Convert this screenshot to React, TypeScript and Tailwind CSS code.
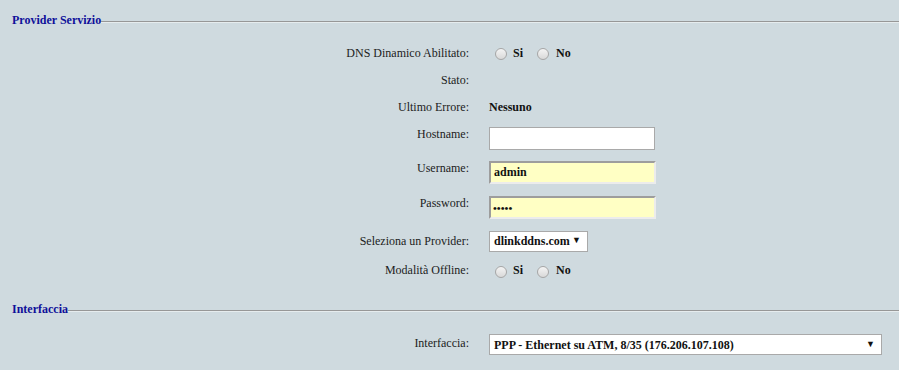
import React from "react";

const SectionTitle = ({ title }: { title: string }) => (
  <div className="flex items-center h-[14px] pl-[12px]">
    <span className="font-bold text-[12px] leading-[14px] text-[#10109a] whitespace-nowrap">
      {title}
    </span>
    <div className="flex-1 h-[2px] mt-[3px] border-t border-t-[#979797] border-b border-b-[#e6ecee]" />
  </div>
);

const Label = ({ text, className = "" }: { text: string; className?: string }) => (
  <div className={`w-[469px] text-right text-[12px] leading-[14px] text-[#1c1c1c] ${className}`}>
    {text}
  </div>
);

const Radio = () => (
  <span className="inline-block w-[12px] h-[12px] rounded-full border border-[#a6a6a6] bg-gradient-to-b from-[#f4f4f4] to-[#d9d9d9] mt-[3px]" />
);

const RadioPair = () => (
  <div className="ml-[26px] flex items-center text-[12px] font-bold text-[#111]">
    <Radio />
    <span className="ml-[6px]">Si</span>
    <span className="ml-[14px] flex items-center">
      <Radio />
    </span>
    <span className="ml-[7px]">No</span>
  </div>
);

const Select = ({ value, width }: { value: string; width: string }) => (
  <div
    className={`ml-[20px] ${width} h-[21px] bg-white border border-[#a9a9a9] flex items-center justify-between pl-[4px] pr-[6px] text-[12px] font-bold text-[#111]`}
  >
    <span>{value}</span>
    <span className="text-[9px] font-normal">▼</span>
  </div>
);

export default function App() {
  return (
    <div className="w-[899px] h-[370px] bg-[#cfdadf] font-['Liberation_Serif',serif] overflow-hidden">
      <div className="pt-[13px]">
        <SectionTitle title="Provider Servizio" />
      </div>

      <div className="mt-[12px]">
        <div className="flex items-center h-[27px]">
          <Label text="DNS Dinamico Abilitato:" />
          <RadioPair />
        </div>
        <div className="flex items-center h-[27px]">
          <Label text="Stato:" />
        </div>
        <div className="flex items-center h-[27px]">
          <Label text="Ultimo Errore:" />
          <span className="ml-[20px] text-[12px] font-bold text-[#111]">Nessuno</span>
        </div>

        <div className="flex items-start h-[35px]">
          <Label text="Hostname:" className="mt-[7px]" />
          <input
            readOnly
            className="ml-[20px] mt-[7px] w-[166px] h-[23px] bg-white border border-[#a9a9a9] outline-none"
          />
        </div>
        <div className="flex items-start h-[35px]">
          <Label text="Username:" className="mt-[6px]" />
          <input
            readOnly
            defaultValue="admin"
            className="ml-[20px] mt-[6px] w-[167px] h-[23px] bg-[#ffffc4] border-2 border-t-[#9d9d9d] border-l-[#9d9d9d] border-b-[#ececec] border-r-[#ececec] pl-[3px] text-[12px] font-bold text-[#111] outline-none"
          />
        </div>
        <div className="flex items-start h-[35px]">
          <Label text="Password:" className="mt-[6px]" />
          <input
            readOnly
            type="password"
            defaultValue="admin"
            className="ml-[20px] mt-[6px] w-[167px] h-[23px] bg-[#ffffc4] border-2 border-t-[#9d9d9d] border-l-[#9d9d9d] border-b-[#ececec] border-r-[#ececec] pl-[2px] text-[11px] font-bold text-[#111] outline-none"
          />
        </div>

        <div className="flex items-center h-[31px] pt-[1px]">
          <Label text="Seleziona un Provider:" />
          <Select value="dlinkddns.com" width="w-[99px]" />
        </div>
        <div className="flex items-center h-[28px]">
          <Label text="Modalità Offline:" />
          <RadioPair />
        </div>
      </div>

      <div className="mt-[18px]">
        <SectionTitle title="Interfaccia" />
      </div>

      <div className="flex items-start mt-[18px]">
        <Label text="Interfaccia:" className="mt-[2px]" />
        <Select value="PPP - Ethernet su ATM, 8/35 (176.206.107.108)" width="w-[393px]" />
      </div>
    </div>
  );
}
